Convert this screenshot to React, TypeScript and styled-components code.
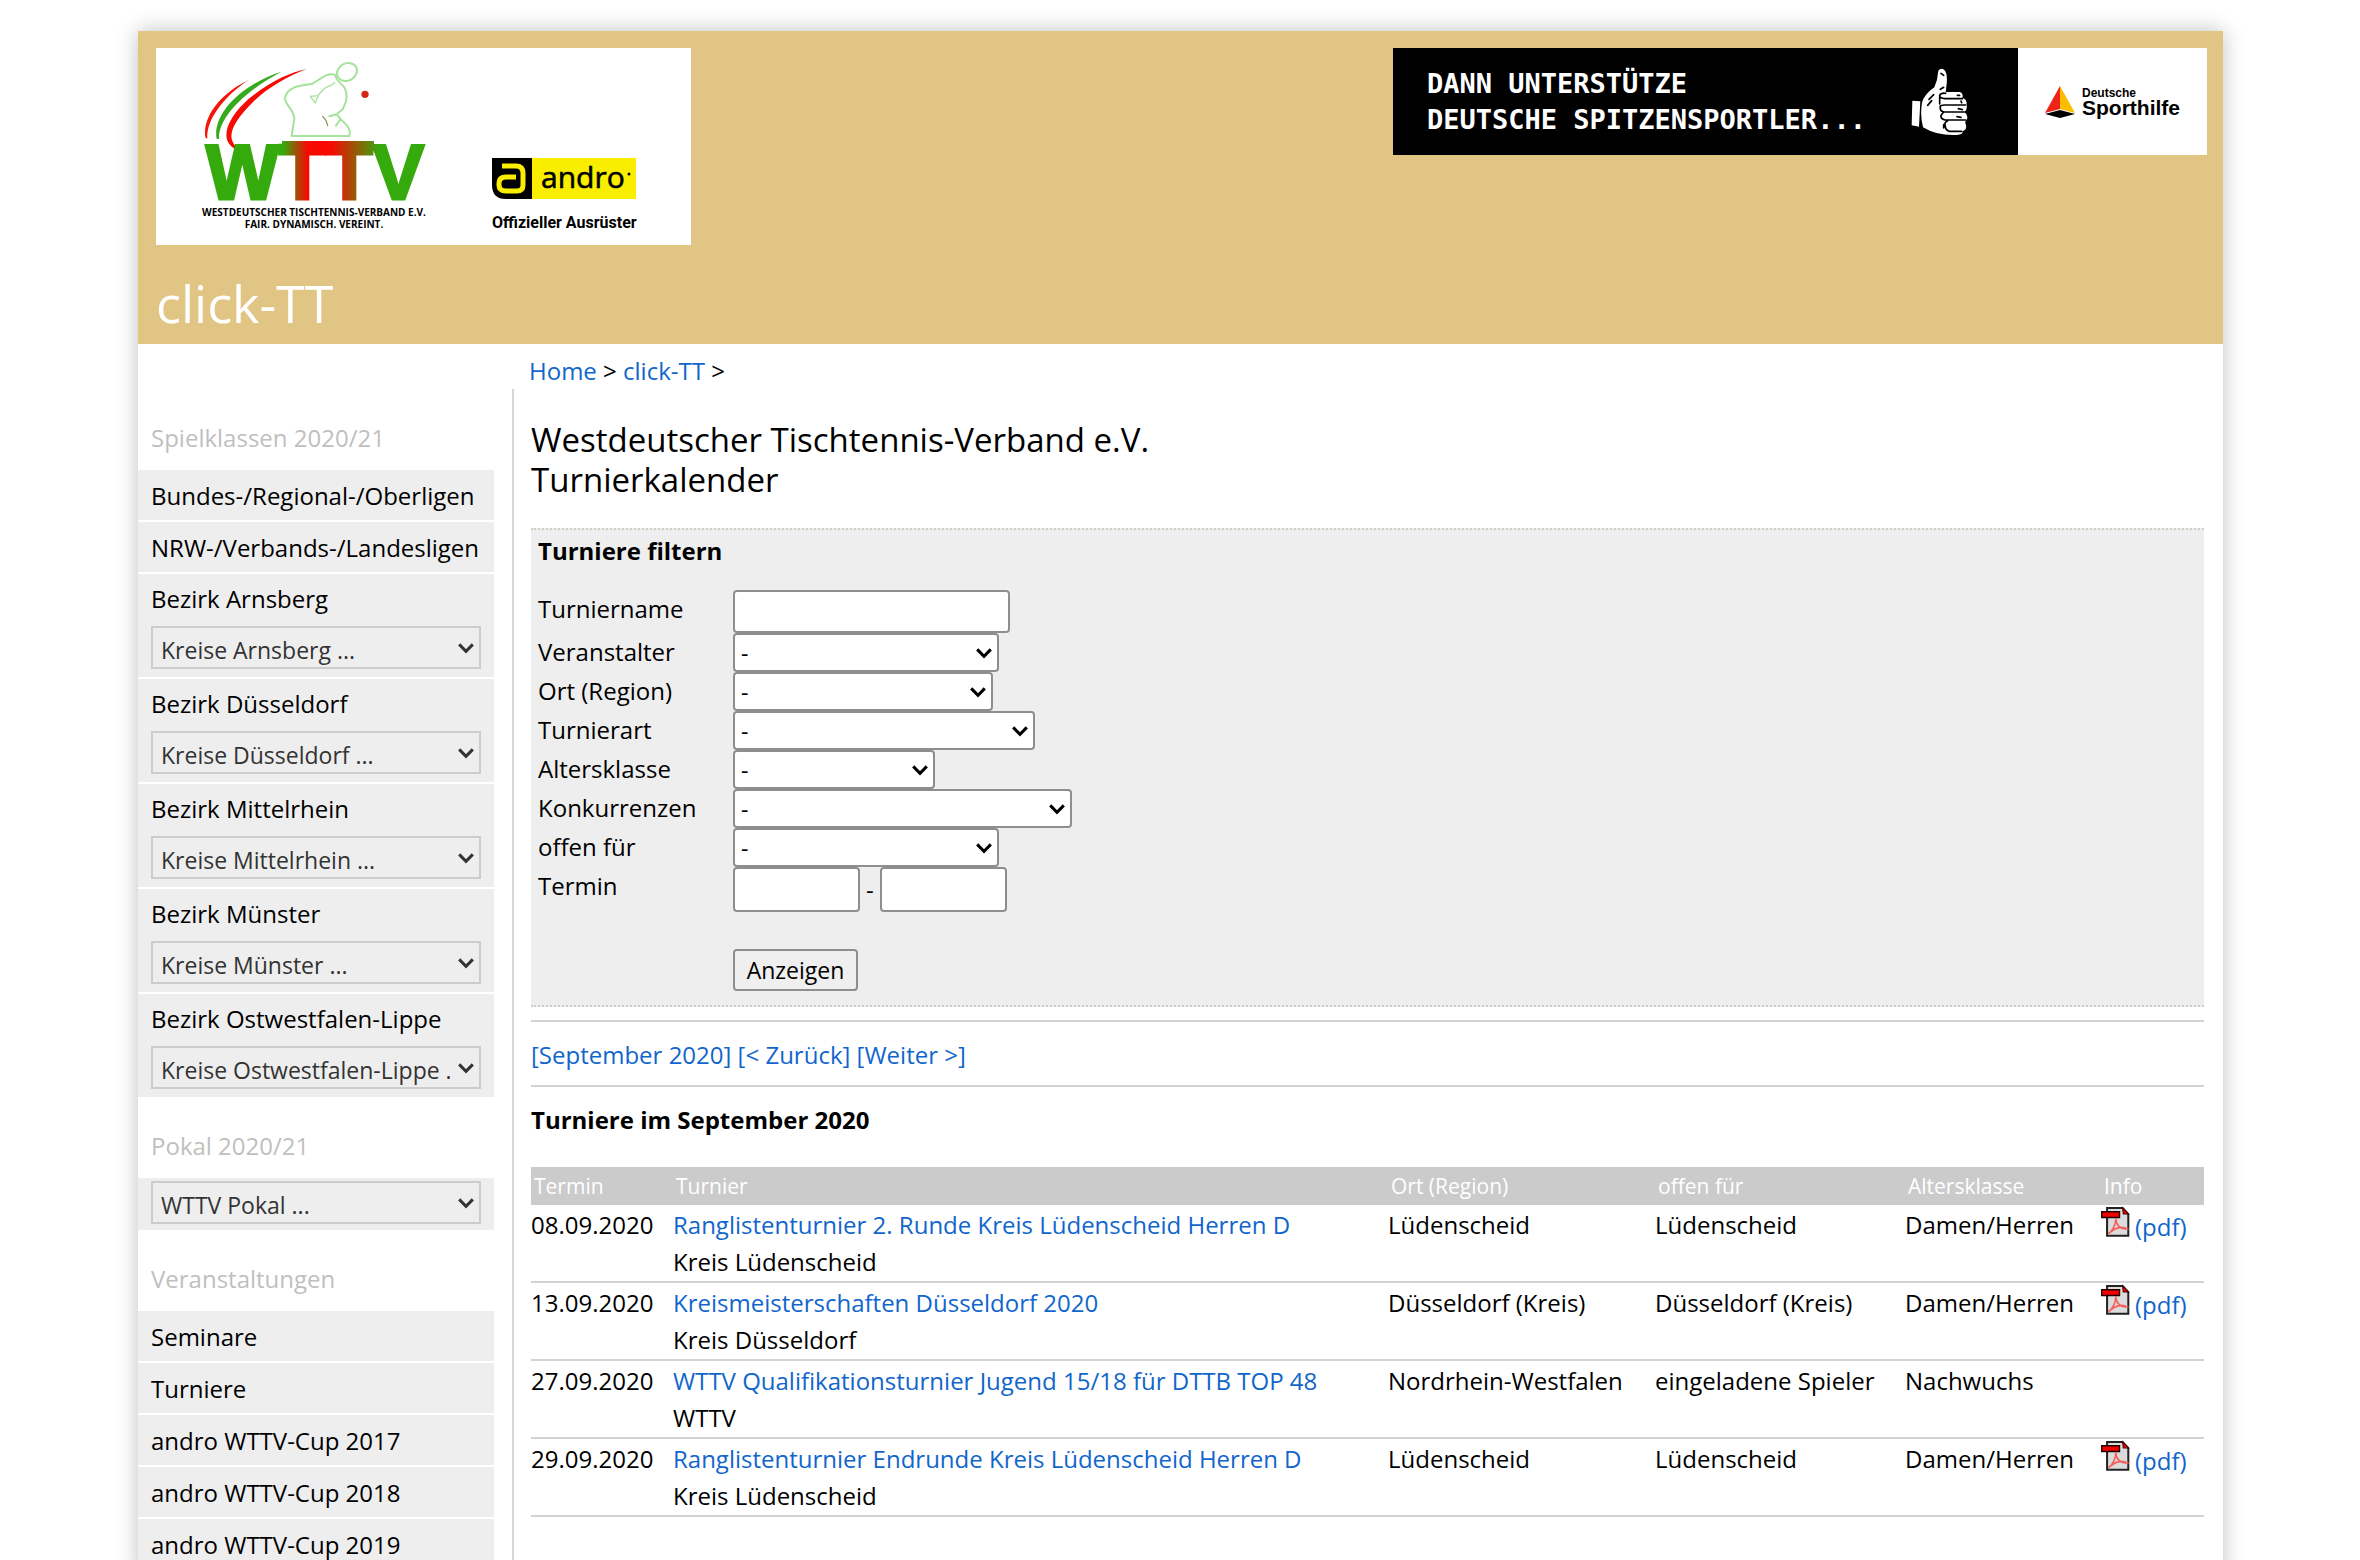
import React, { useId } from "react";
import styled, { createGlobalStyle } from "styled-components";

const colors = {
  sand: "#e1c584",
  panel: "#eeeeee",
  line: "#cccccc",
  link: "#1166cc",
  muted: "#bfbfbf",
};

const GlobalStyle = createGlobalStyle`
  *, *::before, *::after { box-sizing: border-box; }
  body {
    margin: 0;
    background: #fff;
    color: #000;
    font-family: "Open Sans", "Noto Sans", sans-serif;
    font-size: 24px;
    line-height: 37px;
  }
  h1, h2, p, ul { margin: 0; padding: 0; font-weight: inherit; }
  input, select, button { font: inherit; color: inherit; margin: 0; }
`;

const Viewport = styled.div`
  height: 100vh;
  overflow: hidden;
  padding: 31px 137px 0 138px;
`;

const Card = styled.div`
  min-height: 100%;
  background: #fff;
  box-shadow: 0 0 20px rgba(0, 0, 0, 0.25);
`;

const Header = styled.header`
  background: ${colors.sand};
  padding: 17px 16px 6px 18px;
`;

const HeaderTop = styled.div`
  display: flex;
  justify-content: space-between;
  align-items: flex-start;
`;

const LogoLink = styled.a`
  display: block;
  background: #fff;
  svg { display: block; }
`;

const BannerLink = styled.a`
  display: flex;
  height: 107px;
  text-decoration: none;
`;

const BannerClaim = styled.span`
  display: flex;
  align-items: center;
  justify-content: space-between;
  width: 625px;
  padding: 0 50px 0 34px;
  background: #000;
  color: #fff;
  font-family: "DejaVu Sans Mono", monospace;
  font-weight: 700;
  font-size: 27px;
  line-height: 36px;
  white-space: nowrap;
`;

const BannerSponsor = styled.span`
  display: flex;
  width: 189px;
  background: #fff;
`;

const SiteTitle = styled.p`
  margin-top: 22px;
  color: #fff;
  font-size: 52px;
  line-height: 71px;
`;

const Link = styled.a`
  color: ${colors.link};
  text-decoration: none;
`;

const Breadcrumb = styled.nav`
  padding: 8px 0 0 391px;
`;

const Columns = styled.div`
  display: grid;
  grid-template-columns: 374px 1fr;
`;

const Sidebar = styled.nav`
  padding-right: 18px;
`;

const NavHeading = styled.h2`
  padding: 30px 0 14px 13px;
  font-size: 24px;
  color: ${colors.muted};
`;

const NavList = styled.ul`
  list-style: none;
`;

const NavItem = styled.li`
  padding: 7px 13px 6px;
  background: ${colors.panel};
  border-bottom: 2px solid #fff;
  white-space: nowrap;
  &:last-child { border-bottom: 0; }
`;

const NavGroup = styled(NavItem)<{ $bare?: boolean }>`
  padding-top: ${(p) => (p.$bare ? 3 : 6)}px;
  padding-bottom: ${(p) => (p.$bare ? 6 : 8)}px;
`;

const NavLink = styled.a`
  display: block;
  color: #000;
  text-decoration: none;
`;

const SelectWrap = styled.div<{ $width?: number }>`
  position: relative;
  width: ${(p) => (p.$width ? `${p.$width}px` : "100%")};
  svg {
    position: absolute;
    top: 50%;
    right: 7px;
    margin-top: -5px;
    pointer-events: none;
  }
`;

const NavSelectWrap = styled(SelectWrap)`
  color: #333;
  ${NavLink} + & { margin-top: 9px; }
`;

const NavSelect = styled.select`
  display: block;
  appearance: none;
  width: 100%;
  height: 43px;
  padding: 4px 29px 0 8px;
  border: 2px solid ${colors.line};
  border-radius: 0;
  background: ${colors.panel};
  font-size: 23px;
`;

const Main = styled.main`
  border-left: 2px solid #d5d5d5;
  padding: 31px 19px 60px 17px;
`;

const PageTitle = styled.h1`
  font-size: 33px;
  line-height: 40px;
`;

const Filter = styled.form`
  margin-top: 28px;
  padding: 2px 7px 14px;
  border: 2px dotted #cfcfc4;
  border-width: 2px 0;
  background: ${colors.panel};
`;

const SectionTitle = styled.h2`
  font-size: 24px;
  font-weight: 700;
`;

const Fields = styled.div`
  display: grid;
  grid-template-columns: 195px 1fr;
  margin-top: 21px;
`;

const FieldLabel = styled.label`
  line-height: 38px;
`;

const TextField = styled.input<{ $width: number; $height: number }>`
  display: block;
  width: ${(p) => p.$width}px;
  height: ${(p) => p.$height}px;
  padding: 0 6px;
  border: 2px solid #8e8e8e;
  border-radius: 4px;
  background: #fff;
`;

const FilterSelect = styled.select`
  display: block;
  appearance: none;
  width: 100%;
  height: 39px;
  padding: 0 28px 0 6px;
  border: 2px solid #8e8e8e;
  border-radius: 4px;
  background: #fff;
  font-size: 23px;
`;

const DateRange = styled.div`
  display: flex;
  align-items: center;
  gap: 6px;
`;

const SubmitButton = styled.button`
  grid-column: 2;
  justify-self: start;
  margin-top: 37px;
  width: 125px;
  height: 42px;
  padding: 0;
  border: 2px solid #8e8e8e;
  border-radius: 4px;
  background: #efefef;
  font-size: 23px;
  line-height: 37px;
`;

const Pager = styled.nav`
  margin: 13px 0 14px;
  padding: 14px 0 12px;
  border: 2px solid #d2d2d2;
  border-width: 2px 0;
`;

const ResultTable = styled.table`
  width: 100%;
  margin-top: 29px;
  table-layout: fixed;
  border-collapse: separate;
  border-spacing: 0;
  white-space: nowrap;
`;

const HeadCell = styled.th<{ $width?: number }>`
  width: ${(p) => (p.$width ? `${p.$width}px` : "auto")};
  height: 38px;
  padding: 0 0 0 3px;
  background: #cbcbcb;
  color: #fff;
  font-size: 21px;
  font-weight: 400;
  line-height: 29px;
  text-align: left;
`;

const Cell = styled.td`
  padding: 1px 0;
  border-bottom: 2px solid #d2d2d2;
  vertical-align: top;
`;

const PdfLink = styled(Link)`
  display: flex;
  gap: 5px;
  line-height: 41px;
`;

function Chevron() {
  return (
    <svg width="16" height="11" viewBox="0 0 16 11" fill="none" stroke="currentColor" strokeWidth="3" aria-hidden="true">
      <path d="M1.2 1.4 8 8.4l6.800-7" />
    </svg>
  );
}

function ClubLogo() {
  return (
    <svg width="535" height="197" viewBox="0 0 535 197" role="img" aria-label="WTTV">
      <defs>
        <linearGradient id="wttv" gradientUnits="userSpaceOnUse" x1="127" y1="0" x2="224" y2="0">
          <stop offset="0" stopColor="#35aa0c" />
          <stop offset="0.25" stopColor="#f60a02" />
          <stop offset="0.5" stopColor="#f60a02" />
          <stop offset="1" stopColor="#35aa0c" />
        </linearGradient>
      </defs>
      <g transform="translate(34 7) scale(.33333)" fill="none" strokeLinecap="round" strokeLinejoin="round">
        <path fill="#f2160b" d="M47 250C34 190 90 115 176 75 110 118 48 190 52 250Z" />
        <path fill="#35aa1c" d="M80 252C66 180 150 90 274 50 180 100 84 180 87 252Z" />
        <path fill="#f60a02" d="M146 286C80 262 110 190 178 130 240 80 300 52 350 42 290 65 230 100 190 140 130 200 100 250 148 282Z" />
        <g stroke="#a5e29b" strokeWidth="6">
          <ellipse cx="471" cy="51" rx="31" ry="26" transform="rotate(-28 471 51)" />
          <path d="M436 60C410 50 390 75 365 87 330 92 290 95 285 130 288 155 310 160 313 190L305 243H478C485 215 462 205 452 192L440 178 418 184M436 60C438 85 470 85 470 125 468 150 460 155 458 163L440 178M452 192 438 212" />
          <path strokeWidth="4" d="M434 82C425 95 415 92 405 99L385 120 376 144 361 124 385 122" />
        </g>
        <path stroke="#8c9a55" strokeWidth="4" d="M398 184 408 196 413 212" />
        <circle cx="525" cy="118" r="11" fill="#d22a12" />
      </g>
      <rect x="126" y="93" width="92" height="10" fill="url(#wttv)" />
      <text
        x="50"
        y="151"
        fontFamily="Liberation Sans, sans-serif"
        fontWeight="700"
        fontSize="77"
        fill="url(#wttv)"
        stroke="url(#wttv)"
        strokeWidth="3"
      >
        WTTV
      </text>
      <g fontFamily="Open Sans, sans-serif" fontWeight="700" fontSize="10" textAnchor="middle">
        <text x="158" y="168">WESTDEUTSCHER TISCHTENNIS-VERBAND E.V.</text>
        <text x="158" y="180">FAIR. DYNAMISCH. VEREINT.</text>
      </g>
      <path d="M336 110H376V151H350Q336 151 336 137Z" />
      <path fill="#faee00" d="M376 110H480V151H376Z" />
      <path
        fill="none"
        stroke="#faee00"
        strokeWidth="5"
        strokeLinejoin="round"
        d="M346 118H360Q367 118 367 125V137Q367 143 361 143H350Q343 143 343 137V135Q343 129 350 129H360"
      />
      <text x="385" y="140" fontFamily="Open Sans, sans-serif" fontSize="30" stroke="#000" strokeWidth=".6">andro</text>
      <circle cx="473" cy="126" r="1.500" />
      <text x="336" y="180" fontFamily="Roboto, sans-serif" fontWeight="700" fontSize="16">
        Offizieller Ausrüster
      </text>
    </svg>
  );
}

function ThumbUp() {
  return (
    <svg width="57" height="68" viewBox="62 52 171 204" aria-hidden="true">
      <g fill="#fff">
        <path d="M66 150 90 152 86 228 64 224Z" />
        <path d="M144 60Q152 50 162 58 172 68 169 100L166 124H208Q220 128 216 142 230 146 229 162 232 176 222 184 234 192 230 206 222 214 226 220 232 236 216 242 220 252 200 253 140 256 98 230 88 190 96 152 104 130 132 110 142 88 144 60Z" />
      </g>
      <g fill="none" stroke="#000" strokeWidth="5" strokeLinecap="round">
        <path d="M216 144H164Q146 142 148 134 152 126 166 128M222 184H160Q148 180 150 170 146 164 164 163H226M226 208H164Q150 204 152 194L160 184M214 242H176Q164 236 165 226 160 216 172 210M148 134V160M201 134H208M212 151 214 156M204 174 216 177M200 198 212 200M160 222V232" />
        <path d="M112 164 124 150M116 146 130 132M152 68 160 74M150 116 160 110" />
      </g>
    </svg>
  );
}

function SporthilfeLogo() {
  return (
    <svg width="189" height="107" viewBox="0 0 189 107" role="img" aria-label="Deutsche Sporthilfe">
      <path fill="#ee2418" d="M42 38V61L27 65Z" />
      <path fill="#fcbd00" d="M42 38 57 65 42 61Z" />
      <path d="M42 62 57 66 42 70 27 66Z" />
      <g fontFamily="Liberation Sans, sans-serif" fontWeight="700">
        <text x="64" y="49" fontSize="12">Deutsche</text>
        <text x="64" y="67" fontSize="21">Sporthilfe</text>
      </g>
    </svg>
  );
}

function PdfIcon() {
  return (
    <svg width="29" height="31" viewBox="0 -4 86 92" aria-hidden="true">
      <path d="M18 2H64L81 20V84H18Z" fill="#dcdcdc" stroke="#222" strokeWidth="6" />
      <path d="M64 1 82 20H66Z" fill="#e00" stroke="#400" strokeWidth="3" />
      <path
        d="M22 78C34 72 44 50 44 34 46 56 60 66 78 64 60 54 40 62 22 78Z"
        fill="none"
        stroke="#f4605c"
        strokeWidth="5"
      />
      <path d="M2 13H55V30H2Z" fill="#f00000" stroke="#200" strokeWidth="4" />
    </svg>
  );
}

function RegionMenu({ title, option }: { title?: string; option: string }) {
  return (
    <NavGroup $bare={!title}>
      {title && <NavLink href="#">{title}</NavLink>}
      <NavSelectWrap>
        <NavSelect aria-label={option}>
          <option>{option}</option>
        </NavSelect>
        <Chevron />
      </NavSelectWrap>
    </NavGroup>
  );
}

function SelectField({ label, width }: { label: string; width: number }) {
  const id = useId();
  return (
    <>
      <FieldLabel htmlFor={id}>{label}</FieldLabel>
      <SelectWrap $width={width}>
        <FilterSelect id={id}>
          <option>-</option>
        </FilterSelect>
        <Chevron />
      </SelectWrap>
    </>
  );
}

const regions = ["Arnsberg", "Düsseldorf", "Mittelrhein", "Münster", "Ostwestfalen-Lippe"];

const events = ["Seminare", "Turniere", "andro WTTV-Cup 2017", "andro WTTV-Cup 2018", "andro WTTV-Cup 2019"];

const filters = [
  { label: "Veranstalter", width: 266 },
  { label: "Ort (Region)", width: 260 },
  { label: "Turnierart", width: 302 },
  { label: "Altersklasse", width: 202 },
  { label: "Konkurrenzen", width: 339 },
  { label: "offen für", width: 266 },
];

const tournaments = [
  { date: "08.09.2020", name: "Ranglistenturnier 2. Runde Kreis Lüdenscheid Herren D", host: "Kreis Lüdenscheid", place: "Lüdenscheid", open: "Lüdenscheid", age: "Damen/Herren", pdf: true },
  { date: "13.09.2020", name: "Kreismeisterschaften Düsseldorf 2020", host: "Kreis Düsseldorf", place: "Düsseldorf (Kreis)", open: "Düsseldorf (Kreis)", age: "Damen/Herren", pdf: true },
  { date: "27.09.2020", name: "WTTV Qualifikationsturnier Jugend 15/18 für DTTB TOP 48", host: "WTTV", place: "Nordrhein-Westfalen", open: "eingeladene Spieler", age: "Nachwuchs", pdf: false },
  { date: "29.09.2020", name: "Ranglistenturnier Endrunde Kreis Lüdenscheid Herren D", host: "Kreis Lüdenscheid", place: "Lüdenscheid", open: "Lüdenscheid", age: "Damen/Herren", pdf: true },
];

export default function App() {
  return (
    <Viewport>
      <GlobalStyle />
      <Card>
        <Header>
          <HeaderTop>
            <LogoLink href="#"><ClubLogo /></LogoLink>
            <BannerLink href="#">
              <BannerClaim>
                <span>DANN UNTERSTÜTZE<br />DEUTSCHE SPITZENSPORTLER...</span>
                <ThumbUp />
              </BannerClaim>
              <BannerSponsor><SporthilfeLogo /></BannerSponsor>
            </BannerLink>
          </HeaderTop>
          <SiteTitle>click-TT</SiteTitle>
        </Header>

        <Breadcrumb>
          <Link href="#">Home</Link> &gt; <Link href="#">click-TT</Link> &gt;
        </Breadcrumb>

        <Columns>
          <Sidebar>
            <NavHeading>Spielklassen 2020/21</NavHeading>
            <NavList>
              <NavItem><NavLink href="#">Bundes-/Regional-/Oberligen</NavLink></NavItem>
              <NavItem><NavLink href="#">NRW-/Verbands-/Landesligen</NavLink></NavItem>
              {regions.map((r) => (
                <RegionMenu key={r} title={`Bezirk ${r}`} option={`Kreise ${r} ...`} />
              ))}
            </NavList>
            <NavHeading>Pokal 2020/21</NavHeading>
            <NavList>
              <RegionMenu option="WTTV Pokal ..." />
            </NavList>
            <NavHeading>Veranstaltungen</NavHeading>
            <NavList>
              {events.map((e) => (
                <NavItem key={e}><NavLink href="#">{e}</NavLink></NavItem>
              ))}
            </NavList>
          </Sidebar>

          <Main>
            <PageTitle>Westdeutscher Tischtennis-Verband e.V.<br />Turnierkalender</PageTitle>

            <Filter onSubmit={(e) => e.preventDefault()}>
              <SectionTitle>Turniere filtern</SectionTitle>
              <Fields>
                <FieldLabel htmlFor="name">Turniername</FieldLabel>
                <TextField id="name" type="text" $width={277} $height={43} />
                {filters.map((f) => (
                  <SelectField key={f.label} {...f} />
                ))}
                <FieldLabel htmlFor="from">Termin</FieldLabel>
                <DateRange>
                  <TextField id="from" type="text" $width={127} $height={45} />
                  <span>-</span>
                  <TextField type="text" aria-label="Termin bis" $width={127} $height={45} />
                </DateRange>
                <SubmitButton type="submit">Anzeigen</SubmitButton>
              </Fields>
            </Filter>

            <Pager>
              <Link href="#">[September 2020]</Link> <Link href="#">[&lt; Zurück]</Link>{" "}
              <Link href="#">[Weiter &gt;]</Link>
            </Pager>

            <SectionTitle>Turniere im September 2020</SectionTitle>
            <ResultTable>
              <thead>
                <tr>
                  <HeadCell $width={142}>Termin</HeadCell>
                  <HeadCell>Turnier</HeadCell>
                  <HeadCell $width={267}>Ort (Region)</HeadCell>
                  <HeadCell $width={250}>offen für</HeadCell>
                  <HeadCell $width={196}>Altersklasse</HeadCell>
                  <HeadCell $width={103}>Info</HeadCell>
                </tr>
              </thead>
              <tbody>
                {tournaments.map((t) => (
                  <tr key={t.date}>
                    <Cell>{t.date}</Cell>
                    <Cell><Link href="#">{t.name}</Link><br />{t.host}</Cell>
                    <Cell>{t.place}</Cell>
                    <Cell>{t.open}</Cell>
                    <Cell>{t.age}</Cell>
                    <Cell>{t.pdf && <PdfLink href="#"><PdfIcon />(pdf)</PdfLink>}</Cell>
                  </tr>
                ))}
              </tbody>
            </ResultTable>
          </Main>
        </Columns>
      </Card>
    </Viewport>
  );
}
